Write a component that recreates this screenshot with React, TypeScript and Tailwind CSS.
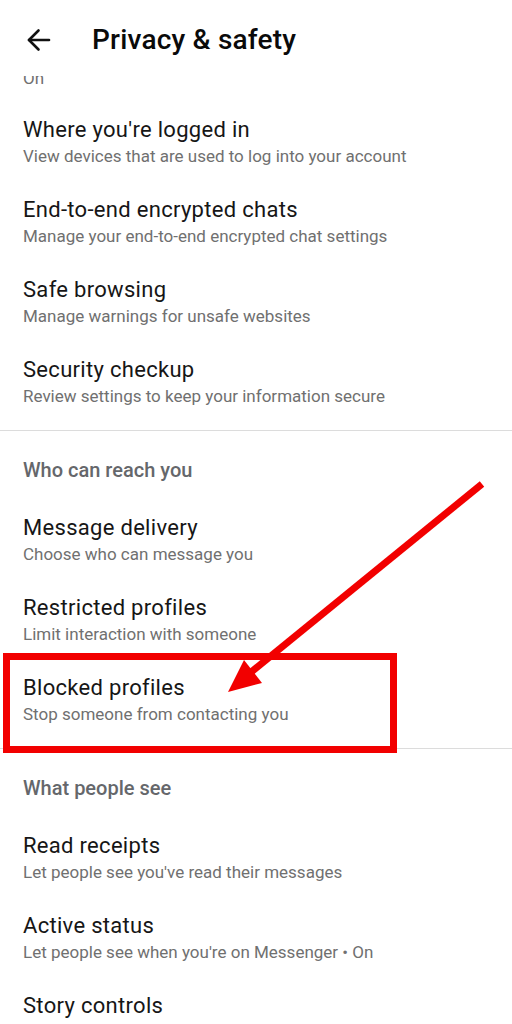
const groups = [
  {
    heading: "",
    items: [
      { title: "Where you're logged in", sub: "View devices that are used to log into your account" },
      { title: "End-to-end encrypted chats", sub: "Manage your end-to-end encrypted chat settings" },
      { title: "Safe browsing", sub: "Manage warnings for unsafe websites" },
      { title: "Security checkup", sub: "Review settings to keep your information secure" },
    ],
  },
  {
    heading: "Who can reach you",
    items: [
      { title: "Message delivery", sub: "Choose who can message you" },
      { title: "Restricted profiles", sub: "Limit interaction with someone" },
      { title: "Blocked profiles", sub: "Stop someone from contacting you" },
    ],
  },
  {
    heading: "What people see",
    items: [
      { title: "Read receipts", sub: "Let people see you've read their messages" },
      { title: "Active status", sub: "Let people see when you're on Messenger • On" },
      { title: "Story controls", sub: "Manage who can see your stories" },
    ],
  },
];

const Row = ({ title, sub }: { title: string; sub: string }) => (
  <div className="px-[23px] py-[14px]">
    <p className="text-[22px] leading-[28px] tracking-[0.3px] text-[#161616]">{title}</p>
    <p className="text-[17px] leading-[24px] text-[#707070]">{sub}</p>
  </div>
);

const App = () => {
  return (
    <div className="relative w-[512px] h-[1024px] overflow-hidden bg-white font-['Roboto',sans-serif]">
      <div className="h-[76px] flex items-center bg-white">
        <svg width="26" height="26" viewBox="0 0 26 26" className="ml-[26px] mt-[4px]" fill="none" stroke="#111" strokeWidth="2.6" strokeLinecap="round" strokeLinejoin="round">
          <path d="M3 13 H23" />
          <path d="M12.5 3.5 L3 13 L12.5 22.5" />
        </svg>
        <h1 className="ml-[40px] mt-[4px] text-[28px] tracking-[0.2px] font-medium text-[#0a0a0a]">Privacy &amp; safety</h1>
      </div>

      <div className="h-[26px] overflow-hidden">
        <p className="-mt-[10px] px-[23px] text-[17px] leading-[24px] text-[#707070]">On</p>
      </div>

      {groups.map((g, gi) => (
        <div key={gi}>
          {g.heading && (
            <>
              <div className="mt-[8px] h-px bg-[#dcdcdc]" />
              <p className="px-[23px] pt-[27px] pb-[18px] text-[20px] leading-[24px] font-medium text-[#65676b]">
                {g.heading}
              </p>
            </>
          )}
          {g.items.map((it) => (
            <Row key={it.title} title={it.title} sub={it.sub} />
          ))}
        </div>
      ))}

      {/* annotation overlay */}
      <div className="absolute left-[3px] top-[653px] w-[394px] h-[100px] border-[7px] border-[#f20000]" />
      <svg className="absolute inset-0 pointer-events-none" width="512" height="1024">
        <line x1="482" y1="484" x2="250" y2="673" stroke="#f20000" strokeWidth="7" />
        <polygon points="228,692 262,683 244,660" fill="#f20000" />
      </svg>
    </div>
  );
};

export default App;
